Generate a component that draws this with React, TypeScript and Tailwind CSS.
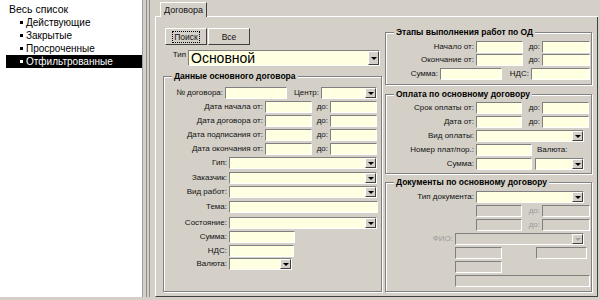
import React from "react";

const lbl = "shrink-0 text-right pr-[2px] whitespace-nowrap";
const group =
  "border border-[#808080] shadow-[inset_1px_1px_0_#ffffff,1px_1px_0_#ffffff] min-w-0";
const legendCls =
  "ml-[8px] px-[2px] bg-[#d4d0c8] text-[8.5px] font-bold leading-[12px] text-black";

function Field({ w, off }: { w: string; off?: boolean }) {
  return (
    <div
      className={`${w} h-full shrink-0 border border-t-[#808080] border-l-[#808080] border-b-[#ffffff] border-r-[#ffffff] ${
        off ? "bg-[#d4d0c8]" : "bg-[#ffffe1]"
      }`}
    />
  );
}

function Btn({ off }: { off?: boolean }) {
  return (
    <div className="w-[11px] h-full shrink-0 bg-[#d4d0c8] border border-t-[#ffffff] border-l-[#ffffff] border-b-[#404040] border-r-[#404040] flex items-center justify-center">
      <div
        className={`w-0 h-0 border-x-[3px] border-t-[3px] border-x-transparent ${
          off ? "border-t-[#a0a0a0]" : "border-t-black"
        }`}
      />
    </div>
  );
}

function Combo({
  w,
  off,
  children,
}: {
  w: string;
  off?: boolean;
  children?: React.ReactNode;
}) {
  return (
    <div
      className={`${w} h-full shrink-0 flex border border-t-[#808080] border-l-[#808080] border-b-[#ffffff] border-r-[#ffffff] ${
        off ? "bg-[#d4d0c8]" : "bg-[#ffffe1]"
      }`}
    >
      <div className="flex-1 min-w-0 overflow-hidden flex items-center">{children}</div>
      <Btn off={off} />
    </div>
  );
}

function Row({ className = "", children }: { className?: string; children: React.ReactNode }) {
  return <div className={`flex items-center h-[12px] ${className}`}>{children}</div>;
}

const items = ["Действующие", "Закрытые", "Просроченные", "Отфильтрованные"];

export default function App() {
  return (
    <div className="w-[600px] h-[300px] bg-[#d4d0c8] flex font-['Liberation_Sans',Arial,sans-serif] text-[#111111] text-[8px] leading-[12px] overflow-hidden">
      {/* left list */}
      <div className="w-[143px] h-[297px] shrink-0 bg-white border-r border-[#9c9c9c] pt-[3px] text-[10px] leading-[13px] text-black">
        <div className="pl-[9px] h-[13px] text-[10.5px]">Весь список</div>
        {items.map((t, i) => {
          const sel = i === items.length - 1;
          return (
            <div
              key={t}
              className={`ml-[6px] h-[13px] flex items-center pl-[14px] ${
                sel ? "bg-black text-white" : ""
              }`}
            >
              <span className={`w-[3px] h-[3px] mr-[3px] shrink-0 ${sel ? "bg-white" : "bg-black"}`} />
              <span>{t}</span>
            </div>
          );
        })}
      </div>

      {/* splitter */}
      <div className="w-[12px] h-[297px] shrink-0 flex">
        <div className="ml-[3px] w-[4px] h-full border-x border-[#8c8c8c]" />
      </div>

      {/* main tab control */}
      <div className="w-[443px] h-[297px] shrink-0 flex flex-col pt-[2px]">
        <div className="h-[15px] flex shrink-0">
          <div className="w-[5px] border-b border-white" />
          <div className="w-[47px] border-t border-l border-white border-r border-r-[#404040] flex items-center justify-center text-[9px]">
            Договора
          </div>
          <div className="flex-1 border-b border-white" />
        </div>
        <div className="flex-1 border-l border-white border-r border-r-[#404040] border-b border-b-[#404040] flex items-start">
          {/* left column */}
          <div className="ml-[7px] pt-[11px] w-[219px] shrink-0 flex flex-col">
            <div className="ml-[2px] flex h-[17px] text-[8.5px]">
              <div className="w-[42px] h-full border border-t-white border-l-white border-b-[#404040] border-r-[#404040] flex items-center justify-center">
                <span className="border border-dotted border-black px-[1px] leading-[10px]">Поиск</span>
              </div>
              <div className="ml-[1px] w-[42px] h-full border border-t-white border-l-white border-b-[#404040] border-r-[#404040] flex items-center justify-center">
                Все
              </div>
            </div>
            <div className="mt-[5px] h-[16px] flex">
              <div className={`${lbl} w-[25px] self-start leading-[10px]`}>Тип</div>
              <Combo w="w-[192px]">
                <span className="pl-[2px] text-[14px] leading-[14px] text-black">Основной</span>
              </Combo>
            </div>
            <fieldset className={`${group} w-[219px] mt-[4px] pt-[5px] pb-[21px] flex flex-col`}>
              <legend className={legendCls}>Данные основного договора</legend>
              <Row>
                <div className={`${lbl} w-[61px]`}>№ договора:</div>
                <Field w="w-[62px]" />
                <div className={`${lbl} w-[34px]`}>Центр:</div>
                <Combo w="w-[56px]" />
              </Row>
              <Row className="mt-[2px]">
                <div className={`${lbl} w-[101px]`}>Дата начала от:</div>
                <Field w="w-[47px]" />
                <div className={`${lbl} w-[18px]`}>до:</div>
                <Field w="w-[47px]" />
              </Row>
              <Row className="mt-[2px]">
                <div className={`${lbl} w-[101px]`}>Дата договора от:</div>
                <Field w="w-[47px]" />
                <div className={`${lbl} w-[18px]`}>до:</div>
                <Field w="w-[47px]" />
              </Row>
              <Row className="mt-[2px]">
                <div className={`${lbl} w-[101px]`}>Дата подписания от:</div>
                <Field w="w-[47px]" />
                <div className={`${lbl} w-[18px]`}>до:</div>
                <Field w="w-[47px]" />
              </Row>
              <Row className="mt-[2px]">
                <div className={`${lbl} w-[101px]`}>Дата окончания от:</div>
                <Field w="w-[47px]" />
                <div className={`${lbl} w-[18px]`}>до:</div>
                <Field w="w-[47px]" />
              </Row>
              <Row className="mt-[2px]">
                <div className={`${lbl} w-[65px]`}>Гип:</div>
                <Combo w="w-[148px]" />
              </Row>
              <Row className="mt-[3px]">
                <div className={`${lbl} w-[65px]`}>Заказчик:</div>
                <Combo w="w-[148px]" />
              </Row>
              <Row className="mt-[2px]">
                <div className={`${lbl} w-[65px]`}>Вид работ:</div>
                <Combo w="w-[148px]" />
              </Row>
              <Row className="mt-[3px]">
                <div className={`${lbl} w-[65px]`}>Тема:</div>
                <Field w="w-[149px]" />
              </Row>
              <Row className="mt-[4px]">
                <div className={`${lbl} w-[65px]`}>Состояние:</div>
                <Combo w="w-[148px]" />
              </Row>
              <Row className="mt-[2px]">
                <div className={`${lbl} w-[65px]`}>Сумма:</div>
                <Field w="w-[66px]" />
              </Row>
              <Row className="mt-[2px]">
                <div className={`${lbl} w-[65px]`}>НДС:</div>
                <Field w="w-[65px]" />
              </Row>
              <Row className="mt-[1px]">
                <div className={`${lbl} w-[65px]`}>Валюта:</div>
                <Combo w="w-[63px]" />
              </Row>
            </fieldset>
          </div>

          {/* right column */}
          <div className="ml-[3px] pt-[9px] w-[208px] shrink-0 flex flex-col">
            <fieldset className={`${group} w-[207px] pt-[3px] pb-[4px] flex flex-col`}>
              <legend className={legendCls}>Этапы выполнения работ по ОД</legend>
              <Row>
                <div className={`${lbl} w-[90px]`}>Начало от:</div>
                <Field w="w-[47px]" />
                <div className={`${lbl} w-[19px]`}>до:</div>
                <Field w="w-[48px]" />
              </Row>
              <Row className="mt-[1px]">
                <div className={`${lbl} w-[90px]`}>Окончание от:</div>
                <Field w="w-[47px]" />
                <div className={`${lbl} w-[19px]`}>до:</div>
                <Field w="w-[48px]" />
              </Row>
              <Row className="mt-[2px]">
                <div className={`${lbl} w-[54px]`}>Сумма:</div>
                <Field w="w-[62px]" />
                <div className={`${lbl} w-[29px]`}>НДС:</div>
                <Field w="w-[59px]" />
              </Row>
            </fieldset>

            <fieldset className={`${group} w-[207px] mt-[3px] pt-[2px] pb-[3px] flex flex-col`}>
              <legend className={legendCls}>Оплата по основному договору</legend>
              <Row>
                <div className={`${lbl} w-[90px]`}>Срок оплаты от:</div>
                <Field w="w-[46px]" />
                <div className={`${lbl} w-[20px]`}>до:</div>
                <Field w="w-[47px]" />
              </Row>
              <Row className="mt-[2px]">
                <div className={`${lbl} w-[90px]`}>Дата от:</div>
                <Field w="w-[46px]" />
                <div className={`${lbl} w-[20px]`}>до:</div>
                <Field w="w-[47px]" />
              </Row>
              <Row className="mt-[2px]">
                <div className={`${lbl} w-[90px]`}>Вид оплаты:</div>
                <Combo w="w-[108px]" />
              </Row>
              <Row className="mt-[2px]">
                <div className={`${lbl} w-[90px]`}>Номер плат/пор.:</div>
                <Field w="w-[56px]" />
                <div className="pl-[5px] whitespace-nowrap">Валюта:</div>
              </Row>
              <Row className="mt-[2px]">
                <div className={`${lbl} w-[90px]`}>Сумма:</div>
                <Field w="w-[56px]" />
                <div className="w-[3px] shrink-0" />
                <Combo w="w-[49px]" />
              </Row>
            </fieldset>

            <fieldset className={`${group} w-[207px] mt-[2px] pt-[3px] pb-[4px] flex flex-col`}>
              <legend className={legendCls}>Документы по основному договору</legend>
              <Row>
                <div className={`${lbl} w-[90px]`}>Тип документа:</div>
                <Combo w="w-[108px]" />
              </Row>
              <Row className="mt-[2px]">
                <div className="w-[90px] shrink-0" />
                <Field w="w-[46px]" off />
                <div className={`${lbl} w-[20px] text-[#9a9a9a]`}>до:</div>
                <Field w="w-[48px]" off />
              </Row>
              <Row className="mt-[2px]">
                <div className="w-[90px] shrink-0" />
                <Field w="w-[46px]" off />
                <div className={`${lbl} w-[20px] text-[#9a9a9a]`}>до:</div>
                <Field w="w-[48px]" off />
              </Row>
              <Row className="mt-[2px]">
                <div className={`${lbl} w-[69px] text-[#9a9a9a]`}>ФИО:</div>
                <Combo w="w-[129px]" off />
              </Row>
              <Row className="mt-[2px]">
                <div className="w-[69px] shrink-0" />
                <Field w="w-[47px]" off />
                <div className="w-[34px] shrink-0" />
                <Field w="w-[51px]" off />
              </Row>
              <Row className="mt-[2px]">
                <div className="w-[69px] shrink-0" />
                <Field w="w-[47px]" off />
              </Row>
              <Row className="mt-[2px]">
                <div className="w-[69px] shrink-0" />
                <Field w="w-[135px]" off />
              </Row>
            </fieldset>
          </div>
        </div>
      </div>
    </div>
  );
}
